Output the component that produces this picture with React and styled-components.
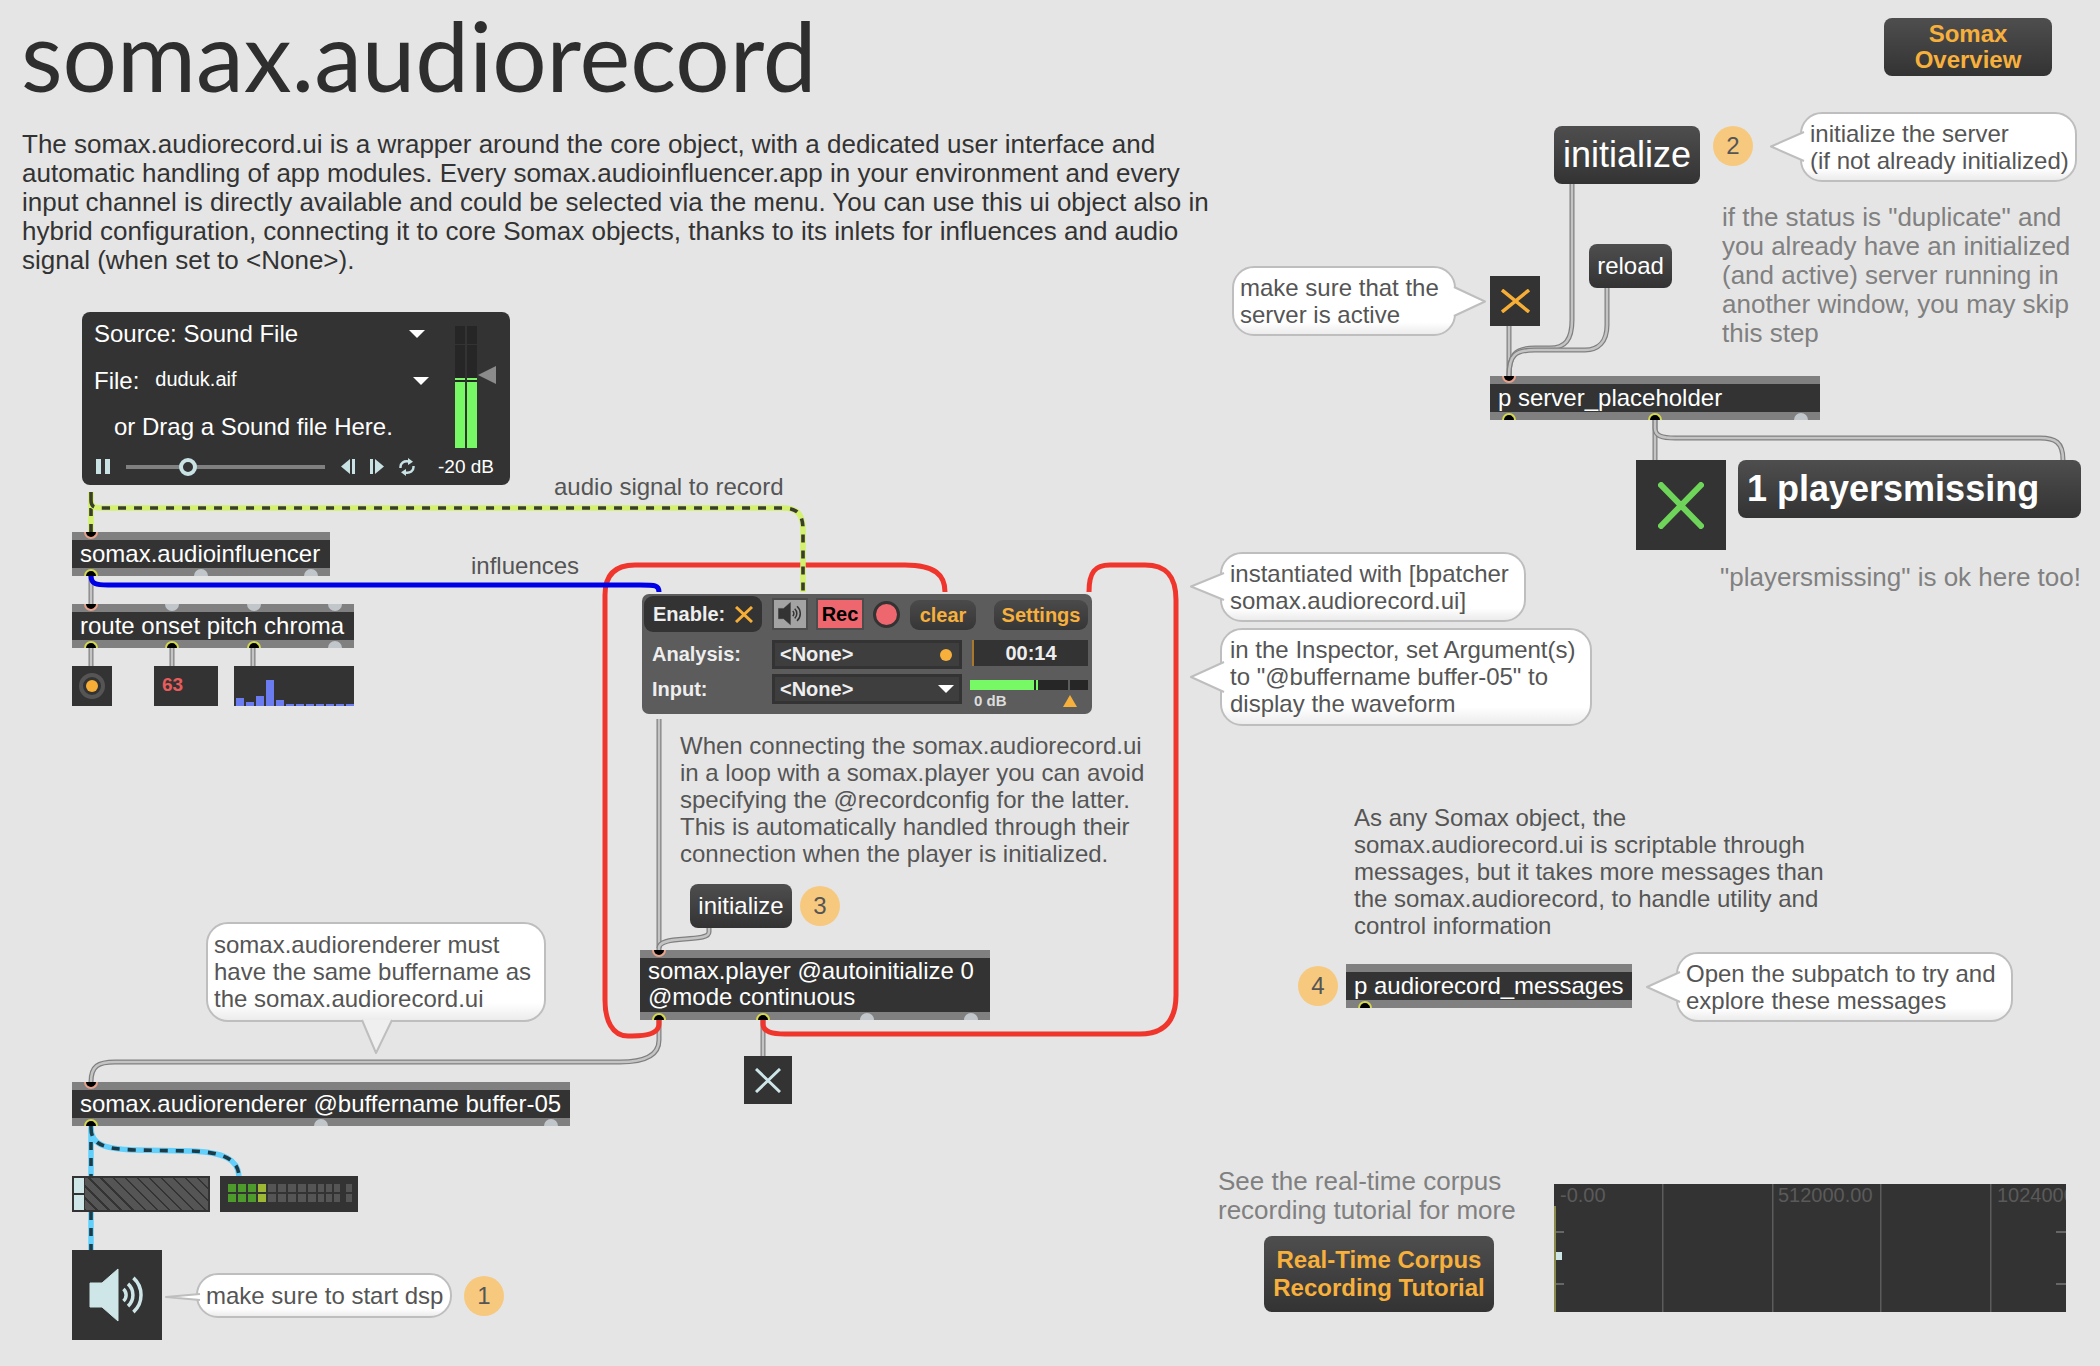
import React from 'react';
import styled, { createGlobalStyle, css } from 'styled-components';

const GlobalStyle = createGlobalStyle`
  html, body {
    margin: 0;
    padding: 0;
    background: #e5e5e5;
  }
  body {
    font-family: "Liberation Sans", Arial, sans-serif;
  }
`;

// everything in a patcher sits at its own spot on the canvas
const placed = css`
  position: absolute;
  left: ${(p) => p.$x}px;
  top: ${(p) => p.$y}px;
  ${(p) => p.$w && `width: ${p.$w}px;`}
  ${(p) => p.$h && `height: ${p.$h}px;`}
  box-sizing: border-box;
`;

const Page = styled.div`
  position: relative;
  width: 2100px;
  height: 1366px;
  overflow: hidden;
  background: #e5e5e5;
  padding: 0 0 0 21px;
  box-sizing: border-box;
`;

const Title = styled.h1`
  margin: -3px 0 0 0;
  font-family: Lato, sans-serif;
  font-weight: 400;
  font-size: 96px;
  line-height: 116px;
  color: #2e2e2e;
`;

const Intro = styled.p`
  margin: 16.5px 0 0 1px;
  font-size: 26px;
  line-height: 29px;
  color: #333;
  white-space: nowrap;
`;

const CordLayer = styled.svg`
  position: absolute;
  left: 0;
  top: 0;
  pointer-events: none;
`;

const ObjectBox = styled.div`
  ${placed}
  background: #333;
  border-top: 8px solid #808080;
  border-bottom: 8px solid #808080;
  color: #fff;
  font-size: 24px;
  line-height: ${(p) => p.$lh || 28}px;
  padding: 0 8px;
  white-space: nowrap;
`;

// inlets and outlets are spread evenly over the object's width, as in Max
const PortRow = styled.div`
  position: absolute;
  left: 0;
  right: 0;
  ${(p) => (p.$in ? 'top: -8px;' : 'bottom: -8px;')}
  padding: 0 12px;
  display: flex;
  justify-content: space-between;
  ${(p) => !p.$in && 'align-items: flex-end;'}
`;

const Port = styled.span`
  width: 14px;
  height: 7px;
  box-sizing: border-box;
  border-radius: ${(p) => (p.$in ? '0 0 7px 7px' : '7px 7px 0 0')};
  ${(p) =>
    p.$on
      ? `background: #000; border: 2px solid ${p.$in ? '#e8a28c' : '#d4d84e'}; ${
          p.$in ? 'border-top: none;' : 'border-bottom: none;'
        }`
      : `background: #c1c6ca;`}
`;

const Inlets = ({ ports }) => (
  <PortRow $in>
    {ports.map((on, i) => (
      <Port key={i} $in $on={on} />
    ))}
  </PortRow>
);

const Outlets = ({ ports }) => (
  <PortRow>
    {ports.map((on, i) => (
      <Port key={i} $on={on} />
    ))}
  </PortRow>
);

const MessageButton = styled.div`
  ${placed}
  display: flex;
  align-items: center;
  justify-content: ${(p) => (p.$start ? 'flex-start' : 'center')};
  ${(p) => p.$start && 'padding-left: 9px;'}
  text-align: center;
  background: linear-gradient(#4e4e4e, #333);
  border-radius: 8px;
  color: ${(p) => (p.$accent ? '#f7b03c' : '#fff')};
  font-size: ${(p) => p.$size || 24}px;
  font-weight: ${(p) => (p.$accent || p.$bold ? 700 : 400)};
  line-height: ${(p) => p.$lh || 28}px;
  white-space: nowrap;
`;

const Badge = styled.div`
  position: absolute;
  left: ${(p) => p.$cx - 20}px;
  top: ${(p) => p.$cy - 20}px;
  width: 40px;
  height: 40px;
  border-radius: 50%;
  background: #f6c97f;
  color: #555;
  font-size: 24px;
  display: flex;
  align-items: center;
  justify-content: center;
`;

const Bubble = styled.div`
  ${placed}
  display: flex;
  align-items: center;
  padding-left: ${(p) => p.$pad || 8}px;
  padding-bottom: 1px;
  background: linear-gradient(#fff 82%, #ececec);
  border: 2px solid #bebebe;
  border-radius: 22px;
  color: #555;
  font-size: 24px;
  line-height: 27px;
  white-space: nowrap;
`;

const Comment = styled.div`
  ${placed}
  color: ${(p) => (p.$faint ? '#808080' : '#555')};
  font-size: ${(p) => (p.$faint ? 26 : 24)}px;
  line-height: ${(p) => (p.$faint ? 29 : 27)}px;
  white-space: nowrap;
`;

const TailSvg = styled.svg`
  position: absolute;
  left: ${(p) => p.$x}px;
  top: ${(p) => p.$y}px;
  overflow: visible;
`;

// little speech tail, coordinates are relative to the bubble's padding box
const Tail = ({ side, at, from, to, len }) => {
  const stroke = { fill: '#fff', stroke: '#bebebe', strokeWidth: 2, strokeLinejoin: 'round' };
  const span = to - from;
  if (side === 'bottom') {
    return (
      <TailSvg $x={from} $y={at} width={span} height={len + 2}>
        <path d={`M0 0 L${span / 2 - 1} ${len + 2} L${span} 0`} {...stroke} fill="#efefef" />
      </TailSvg>
    );
  }
  if (side === 'right') {
    return (
      <TailSvg $x={at} $y={from} width={len + 2} height={span}>
        <path d={`M0 0 L${len + 2} ${span / 2} L0 ${span}`} {...stroke} />
      </TailSvg>
    );
  }
  return (
    <TailSvg $x={-len - 2} $y={from} width={len + 4} height={span}>
      <path d={`M${len + 4} 0 L0 ${span / 2} L${len + 4} ${span}`} {...stroke} />
    </TailSvg>
  );
};

const DarkBox = styled.div`
  ${placed}
  background: #333;
  display: flex;
  align-items: center;
  justify-content: center;
`;

const XMark = ({ w, h, color, sw = 3 }) => (
  <svg width={w} height={h} viewBox={`0 0 ${w} ${h}`}>
    <path d={`M1 1 L${w - 1} ${h - 1} M${w - 1} 1 L1 ${h - 1}`} stroke={color} strokeWidth={sw} fill="none" />
  </svg>
);

const Speaker = ({ size, color }) => (
  <svg width={size} height={(size * 54) / 56} viewBox="0 0 56 54" fill="none">
    <path d="M1 15 H13 L29 1 V53 L13 39 H1 Z" fill={color} stroke={color} strokeWidth="1" strokeLinejoin="round" />
    <g stroke={color} strokeWidth="3.5">
      <path d="M34.4 21 A8 8 0 0 1 34.4 33" />
      <path d="M39 15.9 A15 15 0 0 1 39 38.1" />
      <path d="M44.4 9.9 A23 23 0 0 1 44.4 44.1" />
    </g>
  </svg>
);

// sfplay style player
const PlayerPanel = styled.div`
  ${placed}
  background: #333;
  border-radius: 8px;
  color: #fff;
  display: grid;
  grid-template-columns: 344px 1fr;
  grid-template-rows: 44px 50px 42px 37px;
  font-size: 24px;
  white-space: nowrap;
`;

const PlayerRow = styled.div`
  grid-column: 1;
  display: flex;
  align-items: center;
  justify-content: space-between;
  padding-left: ${(p) => p.$indent || 12}px;
`;

const FileLine = styled.div`
  display: flex;
  align-items: center;
  gap: 16px;
`;

const FileName = styled.span`
  font-size: 20px;
  position: relative;
  top: -2px;
`;

const DownArrow = styled.span`
  display: block;
  width: 0;
  height: 0;
  margin-right: ${(p) => p.$mr || 0}px;
  border-left: 8px solid transparent;
  border-right: 8px solid transparent;
  border-top: 8px solid #fff;
`;

const MeterWrap = styled.div`
  grid-column: 2;
  grid-row: 1 / span 3;
  position: relative;
  display: flex;
  gap: 2px;
  padding: 14px 0 0 29px;
  height: 122px;
`;

const MeterChannel = styled.div`
  width: 10px;
  height: 122px;
  display: flex;
  flex-direction: column;
`;

const MeterPart = styled.div`
  height: ${(p) => p.$h}px;
  margin-bottom: ${(p) => p.$mb || 0}px;
  background: ${(p) => p.$c};
`;

const GainHandle = styled.span`
  position: absolute;
  left: 52px;
  top: 54px;
  width: 0;
  height: 0;
  border-top: 9px solid transparent;
  border-bottom: 9px solid transparent;
  border-right: 18px solid #8b8b8b;
`;

const Transport = styled.div`
  grid-column: 1 / -1;
  display: flex;
  align-items: center;
  padding: 0 0 0 14px;
`;

const Track = styled.div`
  position: relative;
  width: 199px;
  height: 4px;
  margin: 0 16px;
  background: #808080;
`;

const Thumb = styled.span`
  position: absolute;
  left: 53px;
  top: -7px;
  width: 18px;
  height: 18px;
  box-sizing: border-box;
  border: 4px solid #c9e3e5;
  border-radius: 50%;
  background: #333;
`;

const Db = styled.span`
  margin-left: 23px;
  font-size: 19px;
`;

const TransportIcons = styled.div`
  display: flex;
  align-items: center;
  gap: 15px;
`;

// the audiorecord ui
const RecordPanel = styled.div`
  ${placed}
  background: #5c5c5c;
  border-radius: 7px;
  padding: 2px 4px 0 2px;
  color: #eee;
  font-size: 20px;
  font-weight: 700;
  white-space: nowrap;
`;

const TopRow = styled.div`
  display: flex;
  align-items: center;
  height: 36px;
`;

const EnableGroup = styled.div`
  width: 118px;
  height: 36px;
  box-sizing: border-box;
  padding: 0 9px;
  display: flex;
  align-items: center;
  justify-content: space-between;
  background: #333;
  border-radius: 9px;
`;

const SquareButton = styled.div`
  width: ${(p) => p.$w}px;
  height: 32px;
  margin-left: ${(p) => p.$ml}px;
  box-sizing: border-box;
  border: 2px solid #4c4c4c;
  background: ${(p) => p.$bg};
  color: #000;
  display: flex;
  align-items: center;
  justify-content: center;
`;

const RecLamp = styled.span`
  width: 27px;
  height: 27px;
  margin-left: 9px;
  box-sizing: border-box;
  border: 3px solid #333;
  border-radius: 50%;
  background: #ee676e;
`;

const PanelButton = styled.div`
  width: ${(p) => p.$w}px;
  height: 30px;
  margin-left: ${(p) => p.$ml}px;
  margin-top: 2px;
  display: flex;
  align-items: center;
  justify-content: center;
  background: linear-gradient(#4a4a4a, #363636);
  border-radius: 9px;
  color: #f7b03c;
`;

const PanelGrid = styled.div`
  display: grid;
  grid-template-columns: 128px 190px 126px;
  grid-template-rows: 29px 30px;
  row-gap: 5px;
  margin-top: 8px;
  align-items: center;
`;

const PanelLabel = styled.span`
  padding-left: 8px;
`;

const Menu = styled.div`
  height: 100%;
  box-sizing: border-box;
  border: 3px solid #333;
  background: #3e3e3e;
  padding: 0 5px;
  display: flex;
  align-items: center;
  justify-content: space-between;
`;

const OrangeDot = styled.span`
  width: 12px;
  height: 12px;
  border-radius: 50%;
  background: #f7b03c;
  margin-right: 2px;
`;

const TimeBox = styled.div`
  margin: -3px 0 0 10px;
  height: 26px;
  background: #333;
  border-left: 2px solid #a9782a;
  display: flex;
  align-items: center;
  justify-content: center;
`;

const LevelCell = styled.div`
  position: relative;
  height: 100%;
  padding: 6px 0 0 8px;
  box-sizing: border-box;
`;

const LevelTrack = styled.div`
  display: flex;
  height: 10px;
  background: #262626;
  width: 118px;
`;

const LevelPart = styled.span`
  height: 10px;
  width: ${(p) => p.$w}px;
  margin-right: ${(p) => p.$mr || 0}px;
  background: ${(p) => p.$c || 'transparent'};
`;

const LevelText = styled.span`
  display: block;
  margin: 1px 0 0 4px;
  font-size: 15px;
  line-height: 20px;
  color: #ddd;
`;

const ThresholdHandle = styled.span`
  position: absolute;
  left: 101px;
  top: 21px;
  width: 0;
  height: 0;
  border-left: 7px solid transparent;
  border-right: 7px solid transparent;
  border-bottom: 12px solid #f7b03c;
`;

const Bang = styled.div`
  width: 26px;
  height: 26px;
  box-sizing: border-box;
  border: 4px solid #555;
  border-radius: 50%;
  display: flex;
  align-items: center;
  justify-content: center;
  &::after {
    content: '';
    width: 12px;
    height: 12px;
    border-radius: 50%;
    background: #f6ae36;
  }
`;

const NumberBox = styled.div`
  ${placed}
  background: #333;
  color: #e85c5c;
  font-size: 19px;
  font-weight: 700;
  line-height: 38px;
  padding-left: 8px;
`;

const MultiSlider = styled.div`
  ${placed}
  background: #333;
  display: flex;
  align-items: flex-end;
  gap: 2px;
  padding: 0 0 0 2px;
`;

const Bar = styled.span`
  width: 8px;
  height: ${(p) => p.$h}px;
  background: #6a7cf0;
`;

const GainSlider = styled.div`
  ${placed}
  border: 2px solid #333;
  display: flex;
  background: repeating-linear-gradient(45deg, #555 0 7px, #333 7px 8.5px);
`;

const GainKnob = styled.div`
  width: 10px;
  display: flex;
  flex-direction: column;
  justify-content: space-between;
  background: #333;
  padding-right: 1px;
`;

const GainKnobHalf = styled.span`
  height: 15px;
  background: #cfe6e8;
`;

const LedMeter = styled.div`
  ${placed}
  background: #333;
  display: grid;
  grid-template-rows: 8px 8px;
  grid-auto-flow: column;
  grid-auto-columns: min-content;
  row-gap: 2px;
  column-gap: 2px;
  padding: 8px 0 0 8px;
`;

const Led = styled.span`
  width: ${(p) => p.$w}px;
  height: 8px;
  margin-right: ${(p) => p.$mr || 0}px;
  background: ${(p) => p.$c};
`;

const Cord = ({ d, color = 'gray' }) => {
  if (color === 'gray') {
    return (
      <g fill="none">
        <path d={d} stroke="#808080" strokeWidth="5" />
        <path d={d} stroke="#c4c4c4" strokeWidth="2.5" />
      </g>
    );
  }
  if (color === 'red') return <path d={d} fill="none" stroke="#f0362c" strokeWidth="5" />;
  if (color === 'blue') return <path d={d} fill="none" stroke="#0000e8" strokeWidth="5" />;
  const light = color === 'audioA' ? '#d3f06e' : '#62d0fb';
  const dark = color === 'audioA' ? '#3a3d2a' : '#1d3a47';
  return (
    <g fill="none">
      <path d={d} stroke={light} strokeWidth="5.5" />
      <path d={d} stroke={dark} strokeWidth="3.6" strokeDasharray="8 8" />
    </g>
  );
};

const PauseIcon = () => (
  <svg width="14" height="15" viewBox="0 0 14 15" fill="#c9e3e5">
    <rect x="0" width="5" height="15" />
    <rect x="9" width="5" height="15" />
  </svg>
);

const PrevIcon = () => (
  <svg width="14" height="15" viewBox="0 0 14 15" fill="#c9e3e5">
    <path d="M9 0 V15 L0 7.5 Z" />
    <rect x="11" width="3" height="15" />
  </svg>
);

const NextIcon = () => (
  <svg width="14" height="15" viewBox="0 0 14 15" fill="#c9e3e5">
    <rect width="3" height="15" />
    <path d="M5 0 V15 L14 7.5 Z" />
  </svg>
);

const LoopIcon = () => (
  <svg width="16" height="18" viewBox="0 0 16 18" fill="none" stroke="#c9e3e5" strokeWidth="2.4">
    <path d="M1.5 10 C1 5 5 2.5 10 3.5" />
    <path d="M14.5 8 C15 13 11 15.5 6 14.5" />
    <path d="M9 0 L14 3.8 L9 7 Z" fill="#c9e3e5" stroke="none" />
    <path d="M7 11 L2 14.2 L7 18 Z" fill="#c9e3e5" stroke="none" />
  </svg>
);

const LEDS = [
  ['#4c9b2b', 8], ['#4c9b2b', 8], ['#4c9b2b', 8], ['#9cb835', 8],
  ['#555', 8], ['#555', 8], ['#555', 8], ['#555', 8], ['#555', 8],
  ['#555', 6], ['#555', 6], ['#555', 6, 4], ['#555', 6],
];

const CHROMA = [8, 4, 10, 26, 6, 2, 2, 2, 2, 2, 2, 2];

const WaveSvg = styled.svg`
  ${placed}
`;

const Waveform = ({ x, y }) => (
  <WaveSvg
    $x={x}
    $y={y}
    width="512"
    height="128"
    viewBox="0 0 512 128"
    fontFamily="Liberation Sans, Arial, sans-serif"
  >
    <rect width="512" height="128" fill="#333" />
    {[108, 218, 326, 436].map((lx) => (
      <rect key={lx} x={lx} y="0" width="1.5" height="128" fill="#5c5c5c" />
    ))}
    <g fill="#5a5a5a" fontSize="20">
      <text x="6" y="18">-0.00</text>
      <text x="224" y="18">512000.00</text>
      <text x="443" y="18">1024000</text>
    </g>
    <g fill="#666">
      <rect x="0" y="47" width="10" height="2" />
      <rect x="0" y="99" width="10" height="2" />
      <rect x="502" y="47" width="10" height="2" />
      <rect x="502" y="99" width="10" height="2" />
    </g>
    <rect x="0" y="22" width="2" height="106" fill="#8a8a4a" />
    <rect x="2" y="68" width="6" height="8" fill="#cfe6e8" />
  </WaveSvg>
);

const App = () => (
  <Page>
    <GlobalStyle />
    <Title>somax.audiorecord</Title>
    <Intro>
      The somax.audiorecord.ui is a wrapper around the core object, with a dedicated user interface and
      <br />
      automatic handling of app modules. Every somax.audioinfluencer.app in your environment and every
      <br />
      input channel is directly available and could be selected via the menu. You can use this ui object also in
      <br />
      hybrid configuration, connecting it to core Somax objects, thanks to its inlets for influences and audio
      <br />
      signal (when set to &lt;None&gt;).
    </Intro>

    <CordLayer width="2100" height="1366">
      <Cord d="M659 719 V950" />
      <Cord d="M709 928 V932 C709 937 700 938 685 939 C668 940 659 942 659 948" />
      <Cord d="M659 1020 V1040 C659 1055 645 1062 620 1062 H115 C98 1062 91 1066 91 1082" />
      <Cord d="M763 1020 V1056" />
      <Cord d="M91 576 V604" />
      <Cord d="M91 648 V666" />
      <Cord d="M172 648 V666" />
      <Cord d="M253 648 V666" />
      <Cord d="M1509 326 V376" />
      <Cord d="M1572 184 V320 C1572 340 1565 348 1550 348 H1535 C1515 348 1509 355 1509 376" />
      <Cord d="M1607 288 V325 C1607 342 1598 350 1585 350 H1535 C1515 350 1509 355 1509 376" />
      <Cord d="M1655 420 V460" />
      <Cord d="M1655 420 V428 C1655 436 1662 438 1675 438 H2040 C2055 438 2063 442 2063 460" />
      <Cord color="red" d="M659 1020 V1024 C659 1034 645 1036 632 1036 H628 C612 1036 605 1020 605 1000 V595 C605 575 615 565 635 565 H905 C935 565 945 575 945 592" />
      <Cord color="red" d="M763 1020 V1024 C763 1032 772 1034 785 1034 H1140 C1165 1034 1176 1020 1176 995 V600 C1176 575 1165 565 1145 565 H1110 C1095 565 1089 572 1089 592" />
      <Cord color="audioA" d="M91 492 V532" />
      <Cord color="audioA" d="M91 500 C91 508 95 508 105 508 H783 C798 508 803 515 803 530 V592" />
      <Cord color="blue" d="M91 576 C91 584 96 585 108 585 H640 C655 585 659 585 659 592" />
      <Cord color="audioB" d="M91 1126 V1176" />
      <Cord color="audioB" d="M91 1128 C91 1145 105 1149 135 1150 L190 1151 C225 1152 238 1160 239 1176" />
      <Cord color="audioB" d="M91 1212 V1250" />
    </CordLayer>

    <PlayerPanel $x={82} $y={312} $w={428} $h={173}>
      <PlayerRow>
        Source: Sound File
        <DownArrow $mr={1} />
      </PlayerRow>
      <PlayerRow>
        <FileLine>
          File:
          <FileName>duduk.aif</FileName>
        </FileLine>
        <DownArrow $mr={-3} />
      </PlayerRow>
      <PlayerRow $indent={32}>or Drag a Sound file Here.</PlayerRow>
      <MeterWrap>
        {[0, 1].map((ch) => (
          <MeterChannel key={ch}>
            <MeterPart $h={18} $mb={1} $c="#262626" />
            <MeterPart $h={33} $c="#262626" />
            <MeterPart $h={2} $c="#77f965" />
            <MeterPart $h={2} $c="#262626" />
            <MeterPart $h={66} $c="#77f965" />
          </MeterChannel>
        ))}
        <GainHandle />
      </MeterWrap>
      <Transport>
        <PauseIcon />
        <Track>
          <Thumb />
        </Track>
        <TransportIcons>
          <PrevIcon />
          <NextIcon />
          <LoopIcon />
        </TransportIcons>
        <Db>-20 dB</Db>
      </Transport>
    </PlayerPanel>

    <Comment $x={554} $y={473}>audio signal to record</Comment>
    <Comment $x={471} $y={552}>influences</Comment>

    <ObjectBox $x={72} $y={532} $w={258}>
      somax.audioinfluencer
      <Inlets ports={[true]} />
      <Outlets ports={[true, false, false]} />
    </ObjectBox>

    <ObjectBox $x={72} $y={604} $w={282}>
      route onset pitch chroma
      <Inlets ports={[true, false, false, false]} />
      <Outlets ports={[true, true, true, false]} />
    </ObjectBox>

    <DarkBox $x={72} $y={666} $w={40} $h={40}>
      <Bang />
    </DarkBox>
    <NumberBox $x={154} $y={666} $w={64} $h={40}>63</NumberBox>
    <MultiSlider $x={234} $y={666} $w={120} $h={40}>
      {CHROMA.map((h, i) => (
        <Bar key={i} $h={h} />
      ))}
    </MultiSlider>

    <RecordPanel $x={642} $y={594} $w={450} $h={120}>
      <TopRow>
        <EnableGroup>
          Enable:
          <XMark w={18} h={17} color="#f6ae36" />
        </EnableGroup>
        <SquareButton $w={36} $ml={10} $bg="#a3a3a3">
          <Speaker size={24} color="#333" />
        </SquareButton>
        <SquareButton $w={48} $ml={8} $bg="#ee676e">Rec</SquareButton>
        <RecLamp />
        <PanelButton $w={66} $ml={10}>clear</PanelButton>
        <PanelButton $w={94} $ml={18}>Settings</PanelButton>
      </TopRow>
      <PanelGrid>
        <PanelLabel>Analysis:</PanelLabel>
        <Menu>
          &lt;None&gt;
          <OrangeDot />
        </Menu>
        <TimeBox>00:14</TimeBox>
        <PanelLabel>Input:</PanelLabel>
        <Menu>
          &lt;None&gt;
          <DownArrow />
        </Menu>
        <LevelCell>
          <LevelTrack>
            <LevelPart $w={64} $mr={2} $c="#77f965" />
            <LevelPart $w={2} $c="#77f965" />
            <LevelPart $w={30} />
            <LevelPart $w={2} $c="#5c5c5c" />
          </LevelTrack>
          <LevelText>0 dB</LevelText>
          <ThresholdHandle />
        </LevelCell>
      </PanelGrid>
    </RecordPanel>

    <Comment $x={680} $y={732}>
      When connecting the somax.audiorecord.ui
      <br />
      in a loop with a somax.player you can avoid
      <br />
      specifying the @recordconfig for the latter.
      <br />
      This is automatically handled through their
      <br />
      connection when the player is initialized.
    </Comment>

    <MessageButton $x={690} $y={884} $w={102} $h={44}>initialize</MessageButton>
    <Badge $cx={820} $cy={906}>3</Badge>

    <ObjectBox $x={640} $y={950} $w={350} $h={70} $lh={26}>
      somax.player @autoinitialize 0
      <br />
      @mode continuous
      <Inlets ports={[true]} />
      <Outlets ports={[true, true, false, false]} />
    </ObjectBox>

    <DarkBox $x={744} $y={1056} $w={48} $h={48}>
      <XMark w={26} h={25} color="#cfe6e8" />
    </DarkBox>

    <Bubble $x={206} $y={922} $w={340} $h={100} $pad={6}>
      <span>
        somax.audiorenderer must
        <br />
        have the same buffername as
        <br />
        the somax.audiorecord.ui
      </span>
      <Tail side="bottom" at={96} from={154} to={184} len={31} />
    </Bubble>

    <ObjectBox $x={72} $y={1082} $w={498}>
      somax.audiorenderer @buffername buffer-05
      <Inlets ports={[true]} />
      <Outlets ports={[true, false, false]} />
    </ObjectBox>

    <GainSlider $x={72} $y={1176} $w={138} $h={36}>
      <GainKnob>
        <GainKnobHalf />
        <GainKnobHalf />
      </GainKnob>
    </GainSlider>

    <LedMeter $x={220} $y={1176} $w={138} $h={36}>
      {LEDS.map(([c, w, mr], i) => (
        <React.Fragment key={i}>
          <Led $c={c} $w={w} $mr={mr} />
          <Led $c={c} $w={w} $mr={mr} />
        </React.Fragment>
      ))}
    </LedMeter>

    <DarkBox $x={72} $y={1250} $w={90} $h={90}>
      <Speaker size={56} color="#cfe6e8" />
    </DarkBox>

    <Bubble $x={196} $y={1273} $w={256} $h={45}>
      <span>make sure to start dsp</span>
      <Tail side="left" from={19} to={25} len={30} />
    </Bubble>
    <Badge $cx={484} $cy={1296}>1</Badge>

    <MessageButton $x={1884} $y={18} $w={168} $h={58} $accent $lh={26}>
      Somax
      <br />
      Overview
    </MessageButton>

    <MessageButton $x={1554} $y={126} $w={146} $h={58} $size={36}>initialize</MessageButton>
    <Badge $cx={1733} $cy={146}>2</Badge>
    <Bubble $x={1800} $y={112} $w={277} $h={70}>
      <span>
        initialize the server
        <br />
        (if not already initialized)
      </span>
      <Tail side="left" from={18} to={47} len={29} />
    </Bubble>

    <Comment $faint $x={1722} $y={203}>
      if the status is "duplicate" and
      <br />
      you already have an initialized
      <br />
      (and active) server running in
      <br />
      another window, you may skip
      <br />
      this step
    </Comment>

    <Bubble $x={1232} $y={266} $w={224} $h={70} $pad={6}>
      <span>
        make sure that the
        <br />
        server is active
      </span>
      <Tail side="right" at={220} from={19} to={48} len={29} />
    </Bubble>

    <DarkBox $x={1490} $y={276} $w={50} $h={50}>
      <XMark w={29} h={24} color="#f6ae36" sw={3.5} />
    </DarkBox>

    <MessageButton $x={1589} $y={244} $w={83} $h={44}>reload</MessageButton>

    <ObjectBox $x={1490} $y={376} $w={330}>
      p server_placeholder
      <Inlets ports={[true]} />
      <Outlets ports={[true, true, false]} />
    </ObjectBox>

    <DarkBox $x={1636} $y={460} $w={90} $h={90}>
      <XMark w={46} h={47} color="#6fd45a" sw={6} />
    </DarkBox>

    <MessageButton $x={1738} $y={460} $w={343} $h={58} $size={36} $bold $start>
      1 playersmissing
    </MessageButton>

    <Comment $faint $x={1720} $y={563}>"playersmissing" is ok here too!</Comment>

    <Bubble $x={1220} $y={552} $w={306} $h={70}>
      <span>
        instantiated with [bpatcher
        <br />
        somax.audiorecord.ui]
      </span>
      <Tail side="left" from={19} to={46} len={29} />
    </Bubble>

    <Bubble $x={1220} $y={628} $w={372} $h={98}>
      <span>
        in the Inspector, set Argument(s)
        <br />
        to "@buffername buffer-05" to
        <br />
        display the waveform
      </span>
      <Tail side="left" from={32} to={62} len={29} />
    </Bubble>

    <Comment $x={1354} $y={804}>
      As any Somax object, the
      <br />
      somax.audiorecord.ui is scriptable through
      <br />
      messages, but it takes more messages than
      <br />
      the somax.audiorecord, to handle utility and
      <br />
      control information
    </Comment>

    <Badge $cx={1318} $cy={986}>4</Badge>
    <ObjectBox $x={1346} $y={964} $w={286}>
      p audiorecord_messages
      <Outlets ports={[true]} />
    </ObjectBox>
    <Bubble $x={1676} $y={952} $w={337} $h={70}>
      <span>
        Open the subpatch to try and
        <br />
        explore these messages
      </span>
      <Tail side="left" from={18} to={48} len={29} />
    </Bubble>

    <Comment $faint $x={1218} $y={1167}>
      See the real-time corpus
      <br />
      recording tutorial for more
    </Comment>

    <MessageButton $x={1264} $y={1236} $w={230} $h={76} $accent>
      Real-Time Corpus
      <br />
      Recording Tutorial
    </MessageButton>

    <Waveform x={1554} y={1184} />
  </Page>
);

export default App;
